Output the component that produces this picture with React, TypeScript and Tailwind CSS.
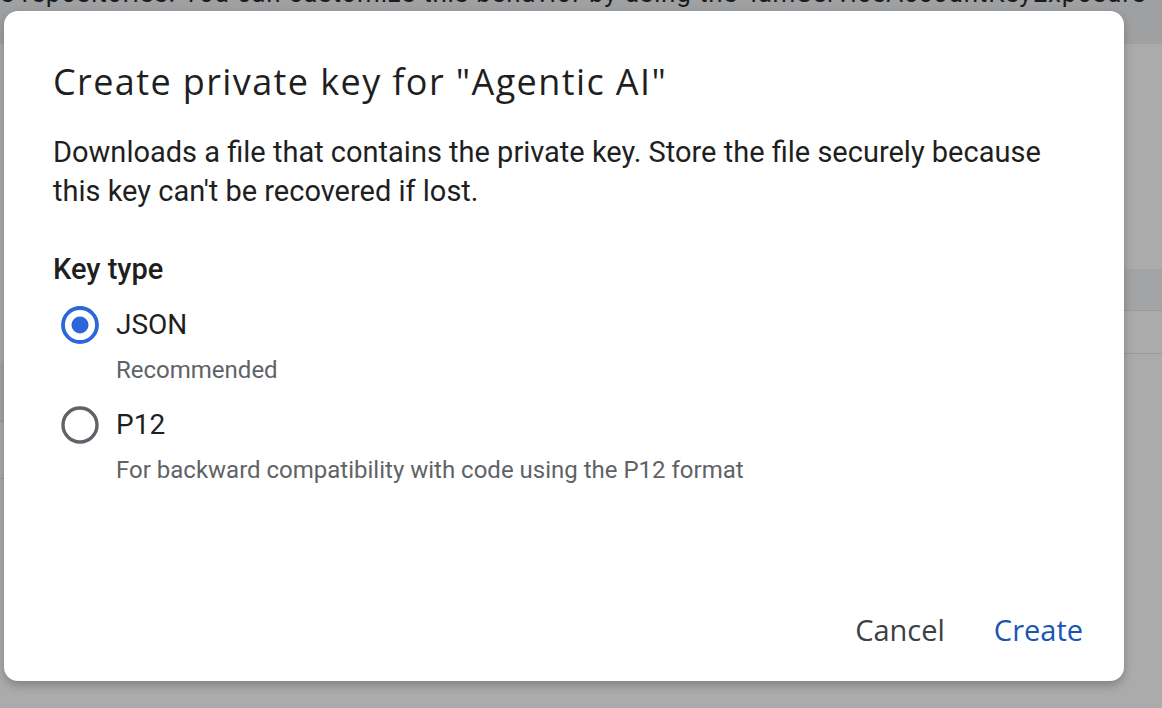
import { useState } from 'react'

type KeyType = 'json' | 'p12'

const options: { id: KeyType; label: string; hint: string }[] = [
  { id: 'json', label: 'JSON', hint: 'Recommended' },
  { id: 'p12', label: 'P12', hint: 'For backward compatibility with code using the P12 format' },
]

function Radio({ checked }: { checked: boolean }) {
  return (
    <svg width="40" height="40" viewBox="0 0 40 40" className="shrink-0">
      <circle
        cx="20"
        cy="20"
        r="17"
        fill="none"
        stroke={checked ? '#2c66d8' : '#5f6368'}
        strokeWidth={checked ? 3.8 : 3.4}
      />
      {checked && <circle cx="20" cy="20" r="8.5" fill="#2c66d8" />}
    </svg>
  )
}

export default function App() {
  const [keyType, setKeyType] = useState<KeyType>('json')

  return (
    <div className="relative h-[708px] w-[1162px] overflow-hidden bg-[#ababab] font-['Roboto',sans-serif]">
      {/* page behind the scrim */}
      <div className="h-[44px] overflow-hidden bg-[#9fa0a2]">
        <p className="-mt-[22px] whitespace-nowrap text-[26px] leading-[30px] tracking-[0.8px] text-[#1c1c1e]">
          e repositories. You can customize this behavior by using the 'iamServiceAccountKeyExposure
        </p>
      </div>
      <div className="flex">
        <div className="w-[4px]">
          <div className="h-[319px] bg-[#ababab]" />
          <div className="h-[58px] bg-[#a3a4a5]" />
          <div className="h-[1px] bg-[#98999a]" />
          <div className="h-[56px] bg-[#ababab]" />
          <div className="h-[1px] bg-[#98999a]" />
        </div>
        <div className="flex-1">
          <div className="h-[225px] bg-[#ababab]" />
          <div className="h-[41px] bg-[#a3a4a5]" />
          <div className="h-[1px] bg-[#98999a]" />
          <div className="h-[42px] bg-[#ababab]" />
          <div className="h-[1px] bg-[#98999a]" />
        </div>
      </div>

      {/* dialog */}
      <div className="absolute left-[4px] top-[11px] flex h-[670px] w-[1120px] flex-col rounded-[14px] bg-white pl-[49px] pr-[25px] shadow-[0_4px_10px_rgba(0,0,0,0.25)]">
        <h2 className="mt-[49px] font-['Open_Sans',sans-serif] text-[36px] leading-[44px] tracking-[1.4px] text-[#1f1f1f]">
          Create private key for "Agentic AI"
        </h2>
        <p className="mt-[29px] max-w-[1010px] text-[29px] leading-[39px] text-[#1f1f1f]">
          Downloads a file that contains the private key. Store the file securely because this key can't be recovered if lost.
        </p>

        <div className="mt-[42px] text-[29px] font-medium leading-[32px] text-[#1f1f1f]">Key type</div>

        <div className="mt-[20px] flex flex-col gap-[20px]">
          {options.map((o) => (
            <label key={o.id} className="flex cursor-pointer flex-col" onClick={() => setKeyType(o.id)}>
              <div className="flex h-[40px] items-center gap-[16px] pl-[7px]">
                <Radio checked={keyType === o.id} />
                <span className="text-[28px] leading-[40px] text-[#1f1f1f]">{o.label}</span>
              </div>
              <span className="mt-[10px] pl-[63px] text-[24px] leading-[30px] text-[#5f6368]">{o.hint}</span>
            </label>
          ))}
        </div>

        <div className="mt-auto mb-[27px] flex justify-end gap-[17px]">
          <button className="px-[16px] py-[6px] font-['Open_Sans',sans-serif] text-[29px] font-medium leading-[36px] text-[#3c4043]">
            Cancel
          </button>
          <button className="px-[16px] py-[6px] font-['Open_Sans',sans-serif] text-[29px] font-medium leading-[36px] text-[#1b55b3]">
            Create
          </button>
        </div>
      </div>
    </div>
  )
}
